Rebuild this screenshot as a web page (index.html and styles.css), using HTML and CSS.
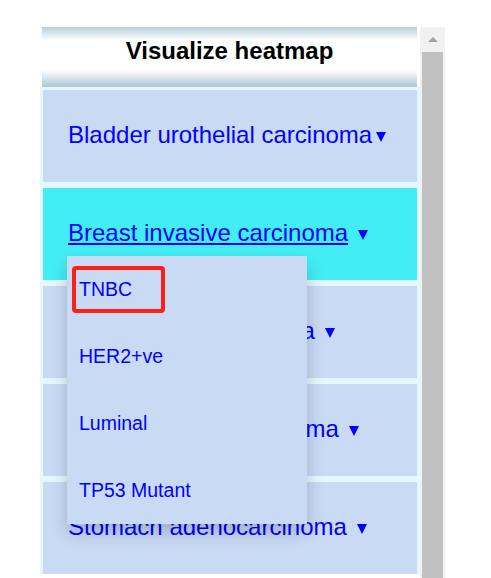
FILE: index.html
```html
<!DOCTYPE html>
<html lang="en">
<head>
    <meta charset="UTF-8">
    <meta name="viewport" content="width=device-width, initial-scale=1.0">
    <title>Visualize heatmap</title>
    <link rel="stylesheet" href="styles.css">
</head>
<body>
    <div class="frame">
        <div class="panel">
            <div class="header">Visualize heatmap</div>
            <ul class="cancers">
                <li><a href="#">Bladder urothelial carcinoma</a><span class="caret tight"></span></li>
                <li class="active">
                    <a href="#">Breast invasive carcinoma</a><span class="caret"></span>
                    <div class="dropdown">
                        <a href="#" class="picked">TNBC</a>
                        <a href="#">HER2+ve</a>
                        <a href="#">Luminal</a>
                        <a href="#">TP53 Mutant</a>
                    </div>
                </li>
                <li><a href="#">Colon adenocarcinoma</a><span class="caret"></span></li>
                <li><a href="#">Hepatocellular carcinoma</a><span class="caret"></span></li>
                <li><a href="#">Stomach adenocarcinoma</a><span class="caret"></span></li>
            </ul>
        </div>
        <div class="scrollbar">
            <div class="arrow-up"></div>
            <div class="thumb"></div>
        </div>
    </div>
</body>
</html>
```

FILE: styles.css
```css
/* Page */
body {
  margin: 0;
  background: #fff;
  font-family: "Liberation Sans", Arial, sans-serif;
  overflow: hidden;
}

.frame {
  display: flex;
  margin: 27px 0 0 40px;
  height: 551px;
}

.panel {
  width: 380px;
}

/* Header strip */
.header {
  margin: 0 3px 0 2px;
  height: 60px;
  box-sizing: border-box;
  padding-top: 10px;
  text-align: center;
  font-weight: bold;
  font-size: 24px;
  color: #000;
  background: linear-gradient(#b6d0db, #fff 22%, #fff 72%, #a8c7d3);
}

/* Cancer list */
ul.cancers {
  list-style: none;
  margin: 0;
  padding: 3px 3px 0;
  background: #e4f9fd;
  display: flex;
  flex-direction: column;
  gap: 6px;
}

ul.cancers li {
  position: relative;
  height: 92px;
  box-sizing: border-box;
  display: flex;
  align-items: center;
  padding: 0 0 2px 25px;
  background: #c9daf5;
  font-size: 24px;
  color: #0000ff;
}

ul.cancers li a {
  color: #0000ff;
  text-decoration: none;
}

ul.cancers li.active {
  background: #42eef4;
}

ul.cancers li.active > a {
  text-decoration: underline;
}

.caret {
  display: inline-block;
  width: 0;
  height: 0;
  margin-left: 10px;
  margin-top: 4px;
  border-left: 5.5px solid transparent;
  border-right: 5.5px solid transparent;
  border-top: 10px solid #0000ff;
}

.caret.tight {
  margin-left: 4px;
}

/* Dropdown */
.dropdown {
  position: absolute;
  left: 24px;
  top: 68px;
  z-index: 2;
  width: 240px;
  background: #c9daf5;
  box-shadow: 0 8px 16px rgba(0, 0, 0, 0.2);
}

.dropdown a {
  position: relative;
  display: block;
  padding: 22px 12px;
  line-height: 23px;
  font-size: 19.5px;
  color: #1a1af0;
  text-decoration: none;
}

.dropdown a.picked::after {
  content: "";
  position: absolute;
  left: 5px;
  top: 10px;
  width: 85px;
  height: 39px;
  border: 4px solid #ff2015;
  border-radius: 4px;
}

/* Scrollbar */
.scrollbar {
  width: 25px;
  background: #f1f1f1;
  display: flex;
  flex-direction: column;
  align-items: center;
}

.arrow-up {
  margin-top: 10px;
  width: 0;
  height: 0;
  border-left: 5px solid transparent;
  border-right: 5px solid transparent;
  border-bottom: 5px solid #a3a3a3;
}

.thumb {
  margin-top: 10px;
  width: 21px;
  flex: 1;
  background: #c1c1c1;
}
```
